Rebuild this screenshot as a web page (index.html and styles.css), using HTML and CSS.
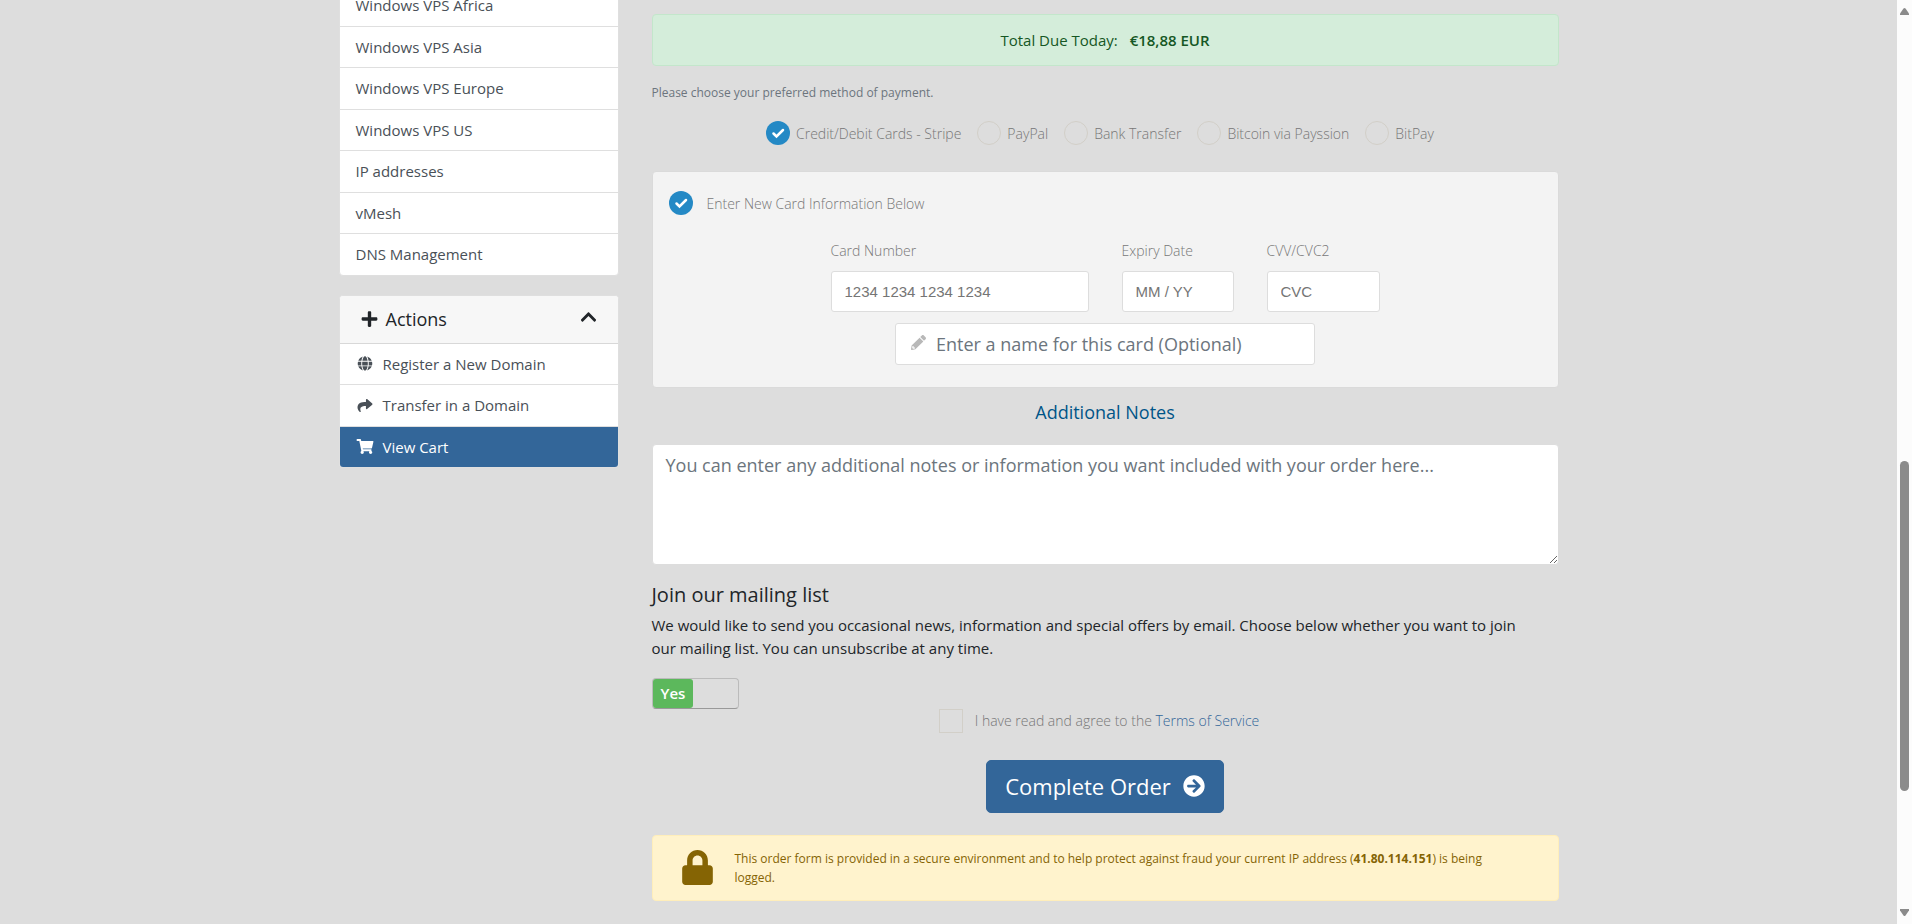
FILE: index.html
```html
<!DOCTYPE html>
<html lang="en">
<head>
<meta charset="utf-8">
<title>Checkout</title>
<link rel="stylesheet" href="styles.css">
</head>
<body>
<div class="page">
  <div class="container">
    <aside class="sidebar">
      <nav class="panel categories" aria-label="Categories">
        <a class="item" href="#">Windows VPS Africa</a>
        <a class="item" href="#">Windows VPS Asia</a>
        <a class="item" href="#">Windows VPS Europe</a>
        <a class="item" href="#">Windows VPS US</a>
        <a class="item" href="#">IP addresses</a>
        <a class="item" href="#">vMesh</a>
        <a class="item" href="#">DNS Management</a>
      </nav>
      <nav class="panel" aria-label="Actions">
        <div class="panel-head">
          <svg class="icon head-icon" viewBox="0 0 448 512"><path d="M416 208H272V64c0-17.67-14.33-32-32-32h-32c-17.67 0-32 14.33-32 32v144H32c-17.67 0-32 14.33-32 32v32c0 17.67 14.33 32 32 32h144v144c0 17.67 14.33 32 32 32h32c17.67 0 32-14.33 32-32V304h144c17.67 0 32-14.33 32-32v-32c0-17.67-14.33-32-32-32z"/></svg>
          <h3 class="panel-title">Actions</h3>
          <svg class="icon head-icon chevron" viewBox="0 0 448 512"><path d="M240.971 130.524l194.343 194.343c9.373 9.373 9.373 24.569 0 33.941l-22.667 22.667c-9.357 9.357-24.522 9.375-33.901.04L224 227.495 69.255 381.516c-9.379 9.335-24.544 9.317-33.901-.04l-22.667-22.667c-9.373-9.373-9.373-24.569 0-33.941L207.030 130.525c9.372-9.373 24.568-9.373 33.941-.001z"/></svg>
        </div>
        <a class="item" href="#"><svg class="icon item-icon" viewBox="0 0 496 512"><path d="M336.500 160C322 70.700 287.800 8 248 8s-74 62.700-88.500 152h177zM152 256c0 22.200 1.200 43.500 3.300 64h185.300c2.100-20.500 3.300-41.800 3.300-64s-1.200-43.500-3.300-64H155.300c-2.100 20.500-3.300 41.800-3.300 64zm324.700-96c-28.600-67.900-86.500-120.400-158-141.600 24.400 33.800 41.200 84.700 50 141.600h108zM177.200 18.400C105.800 39.600 47.800 92.100 19.300 160h108c8.700-56.900 25.500-107.800 49.900-141.600zM487.400 192H372.700c2.100 21 3.300 42.500 3.300 64s-1.200 43-3.300 64h114.600c5.500-20.500 8.600-41.800 8.600-64s-3.100-43.500-8.500-64zM120 256c0-21.500 1.200-43 3.300-64H8.600C3.200 212.500 0 233.800 0 256s3.200 43.500 8.600 64h114.600c-2-21-3.200-42.500-3.200-64zm39.500 96c14.500 89.300 48.700 152 88.500 152s74-62.700 88.500-152h-177zm159.300 141.600c71.400-21.200 129.400-73.700 158-141.600h-108c-8.800 56.900-25.600 107.800-50 141.600zM19.300 352c28.600 67.900 86.500 120.400 158 141.600-24.400-33.800-41.200-84.700-50-141.600h-108z"/></svg>Register a New Domain</a>
        <a class="item" href="#"><svg class="icon item-icon" viewBox="0 0 512 512"><path d="M503.691 189.836L327.687 37.851C312.281 24.546 288 35.347 288 56.015v80.053C127.371 137.907 0 170.100 0 322.326c0 61.441 39.581 122.309 83.333 154.132 13.653 9.931 33.111-2.533 28.077-18.631C66.066 312.814 132.917 274.316 288 272.085V360c0 20.700 24.300 31.453 39.687 18.164l176.004-152c11.071-9.562 11.086-26.753 0-36.328z"/></svg>Transfer in a Domain</a>
        <a class="item active" href="#"><svg class="icon item-icon" viewBox="0 0 576 512"><path d="M528.120 301.319l47.273-208C578.806 78.301 567.391 64 551.990 64H159.208l-9.166-44.810C147.758 8.021 137.930 0 126.529 0H24C10.745 0 0 10.745 0 24v16c0 13.255 10.745 24 24 24h69.883l70.248 343.435C147.325 417.100 136 435.222 136 456c0 30.928 25.072 56 56 56s56-25.072 56-56c0-15.674-6.447-29.835-16.824-40h209.647C430.447 426.165 424 440.326 424 456c0 30.928 25.072 56 56 56s56-25.072 56-56c0-22.172-12.888-41.332-31.579-50.405l5.517-24.276c3.413-15.018-8.002-29.319-23.403-29.319H218.117l-6.545-32h293.145c11.206 0 20.920-7.754 23.403-18.681z"/></svg>View Cart</a>
      </nav>
    </aside>

    <main class="checkout">
      <div class="alert total">Total Due Today: <strong>€18,88 EUR</strong></div>
      <p class="hint">Please choose your preferred method of payment.</p>
      <div class="methods">
        <label class="choice"><input class="radio" type="radio" name="method" checked>Credit/Debit Cards - Stripe</label>
        <label class="choice"><input class="radio" type="radio" name="method">PayPal</label>
        <label class="choice"><input class="radio" type="radio" name="method">Bank Transfer</label>
        <label class="choice"><input class="radio" type="radio" name="method">Bitcoin via Payssion</label>
        <label class="choice"><input class="radio" type="radio" name="method">BitPay</label>
      </div>

      <section class="card-box">
        <label class="choice new-card"><input class="radio" type="radio" name="card" checked>Enter New Card Information Below</label>
        <div class="card-fields">
          <div class="field"><label for="number">Card Number</label><input class="text-input" id="number" type="text" placeholder="1234 1234 1234 1234"></div>
          <div class="field"><label for="expiry">Expiry Date</label><input class="text-input" id="expiry" type="text" placeholder="MM / YY"></div>
          <div class="field"><label for="cvc">CVV/CVC2</label><input class="text-input" id="cvc" type="text" placeholder="CVC"></div>
        </div>
        <div class="card-name">
          <svg class="icon" viewBox="0 0 512 512"><path d="M497.900 142.100l-46.100 46.100c-4.700 4.700-12.300 4.700-17 0l-111-111c-4.700-4.700-4.700-12.300 0-17l46.100-46.100c18.700-18.700 49.100-18.700 67.900 0l60.100 60.100c18.800 18.700 18.800 49.100 0 67.900zM284.200 99.800L21.600 362.400.4 483.900c-2.900 16.400 11.400 30.600 27.800 27.800l121.500-21.300 262.600-262.600c4.700-4.700 4.700-12.300 0-17l-111-111c-4.800-4.700-12.400-4.700-17.100 0zM88 424h48v36.300l-64.500 11.300-31.100-31.100L51.700 376H88v48z"/></svg>
          <input type="text" aria-label="Card name" placeholder="Enter a name for this card (Optional)">
        </div>
      </section>

      <h2 class="notes-title">Additional Notes</h2>
      <textarea class="notes" aria-label="Additional Notes" placeholder="You can enter any additional notes or information you want included with your order here..."></textarea>

      <h3 class="mailing-title">Join our mailing list</h3>
      <p class="mailing-text">We would like to send you occasional news, information and special offers by email. Choose below whether you want to join our mailing list. You can unsubscribe at any time.</p>
      <button class="switch" type="button" role="switch" aria-checked="true" aria-label="Join our mailing list"><span class="switch-on">Yes</span></button>

      <div class="terms">
        <label class="choice"><input class="check" type="checkbox"><span>I have read and agree to the <a href="#">Terms of Service</a></span></label>
      </div>
      <button class="complete" type="submit">Complete Order
        <svg class="icon" viewBox="0 0 512 512"><path d="M256 8c137 0 248 111 248 248S393 504 256 504 8 393 8 256 119 8 256 8zm-28.900 143.600l75.500 72.400H120c-13.300 0-24 10.700-24 24v16c0 13.300 10.700 24 24 24h182.600l-75.500 72.400c-9.700 9.300-9.900 24.800-.4 34.300l11 10.900c9.400 9.400 24.600 9.400 33.900 0L404.300 273c9.400-9.400 9.400-24.600 0-33.900L271.600 106.300c-9.400-9.400-24.600-9.400-33.900 0l-11 10.900c-9.500 9.600-9.300 25.100.4 34.400z"/></svg>
      </button>
      <div class="alert secure">
        <svg class="icon" viewBox="0 0 448 512"><path d="M400 224h-24v-72C376 68.200 307.800 0 224 0S72 68.200 72 152v72H48c-26.500 0-48 21.500-48 48v192c0 26.500 21.500 48 48 48h352c26.500 0 48-21.500 48-48V272c0-26.500-21.500-48-48-48zm-104 0H152v-72c0-39.700 32.300-72 72-72s72 32.300 72 72v72z"/></svg>
        <p>This order form is provided in a secure environment and to help protect against fraud your current IP address (<strong>41.80.114.151</strong>) is being logged.</p>
      </div>
    </main>
  </div>
</div>
<div class="scrollbar" aria-hidden="true">
  <svg class="arrow" viewBox="0 0 9 7"><path d="M0 7V5.500L3.500.5Q4.500-.5 5.500.5L9 5.500V7z"/></svg>
  <div class="track"><div class="thumb"></div></div>
  <svg class="arrow" viewBox="0 0 9 7"><path d="M0 0V1.500L3.500 6.500Q4.500 7.500 5.500 6.500L9 1.500V0z"/></svg>
</div>
</body>
</html>
```

FILE: styles.css
```css
* {
  box-sizing: border-box;
}

body {
  margin: 0;
  height: 100vh;
  display: grid;
  grid-template-columns: 1fr 15px;
  overflow: hidden;
  background: #ddd;
  color: #212529;
  font: 15px/1.5 "Open Sans", "Noto Sans", sans-serif;
}

p, h2, h3 {
  margin: 0;
  font-weight: 400;
}

input, textarea, button {
  font: inherit;
}

a {
  text-decoration: none;
}

.icon {
  fill: currentColor;
  flex: none;
}

.page {
  overflow: hidden;
}

.container {
  max-width: 1220px;
  margin: 0 auto;
  display: grid;
  grid-template-columns: 280px 1fr;
  gap: 33px;
  align-items: start;
}

/* Sidebar */
.sidebar {
  display: grid;
  gap: 19px;
  margin-top: -16px;
}

.panel {
  background: #fff;
  border: 1px solid #dfdfdf;
  border-radius: 4px;
  overflow: hidden;
}

.item {
  display: flex;
  align-items: center;
  padding: 9px 16px;
  color: #495057;
}

.item + .item {
  border-top: 1px solid #dfdfdf;
}

.item-icon {
  width: 18px;
  height: 15px;
  margin-right: 9px;
}

.item.active {
  background: #336699;
  color: #fff;
}

.panel-head {
  display: flex;
  align-items: center;
  gap: 8px;
  padding: 10px 21px;
  background: #f7f7f7;
  border-bottom: 1px solid #d8d8d8;
}

.head-icon {
  width: 17px;
  height: 18px;
}

.chevron {
  margin-bottom: 4px;
}

.panel-title {
  flex: 1;
  font-size: 18px;
}

/* Payment */
.alert {
  border: 1px solid;
  border-radius: 4px;
}

.total {
  margin-top: 14px;
  padding: 14px 20px;
  background: #d4edda;
  border-color: #c3e6cb;
  color: #155724;
  line-height: 22px;
  text-align: center;
}

.total strong {
  margin-left: 8px;
  font-weight: 600;
}

.hint {
  margin-top: 18px;
  color: #6c757d;
  font-size: 12px;
}

.methods {
  display: flex;
  justify-content: center;
  gap: 16px;
  margin: 19px 10px 26px 0;
}

.choice {
  display: flex;
  align-items: center;
  gap: 6px;
  color: #777;
  font-size: 14px;
  font-weight: 300;
}

.radio, .check {
  appearance: none;
  flex: none;
  width: 24px;
  height: 24px;
  margin: 0;
  border: 1px solid #d2cfc8;
}

.radio {
  border-radius: 50%;
}

.radio:checked {
  border: 0;
  background: #2489c5 url("data:image/svg+xml,%3Csvg xmlns='http://www.w3.org/2000/svg' viewBox='0 0 24 24'%3E%3Cpath d='M7.500 12.500l3 3 6.500-6.500' fill='none' stroke='%23fff' stroke-width='2.500' stroke-linecap='round'/%3E%3C/svg%3E");
}

.card-box {
  padding: 19px 16px 22px;
  background: #f3f3f3;
  border: 1px solid #dadada;
  border-radius: 4px;
}

.new-card {
  gap: 14px;
}

.card-fields {
  display: grid;
  grid-template-columns: 258px 112px 113px;
  justify-content: center;
  gap: 33px;
  margin-top: 25px;
}

.field label {
  display: block;
  margin-bottom: 10px;
  color: #777;
  font-size: 14px;
  font-weight: 300;
}

.text-input {
  display: block;
  width: 100%;
  height: 41px;
  padding: 0 13px;
  border: 1px solid #ddd;
  border-radius: 3px;
  background: #fff;
  font: 15px "Liberation Sans", Arial, sans-serif;
}

.card-name {
  display: flex;
  align-items: center;
  gap: 10px;
  width: 420px;
  margin: 11px auto 0;
  padding: 0 15px;
  background: #fff;
  border: 1px solid #ddd;
  border-radius: 3px;
}

.card-name .icon {
  width: 15px;
  height: 15px;
  margin-bottom: 4px;
  fill: #b8b8b8;
}

.card-name input {
  flex: 1;
  min-width: 0;
  height: 40px;
  padding: 0;
  border: 0;
  font-size: 18px;
}

::placeholder {
  color: #757575;
}

.card-name ::placeholder, .notes::placeholder {
  color: #6c757d;
}

/* Notes and mailing list */
.notes-title {
  margin: 11px 0 18px;
  color: #058;
  font-size: 18px;
  text-align: center;
}

.notes {
  display: block;
  width: 100%;
  height: 121px;
  padding: 7px 13px;
  border: 1px solid #ddd;
  border-radius: 4px;
  background: #fff;
  font-size: 18px;
}

.mailing-title {
  margin: 15px 0 4px;
  font-size: 20px;
}

.mailing-text {
  padding-right: 19px;
  line-height: 23px;
}

.switch {
  display: flex;
  width: 87px;
  margin-top: 18px;
  padding: 0;
  border: 1px solid #bbb;
  border-bottom-color: #999;
  border-radius: 4px;
  background: transparent;
}

.switch-on {
  padding: 3px 8px;
  border-radius: 3px;
  background: #5cb85c;
  color: #fff;
  font-weight: 600;
}

.terms {
  display: flex;
  justify-content: center;
  margin-right: 12px;
}

.terms .choice {
  gap: 12px;
}

.terms a {
  color: #369;
}

.complete {
  display: flex;
  align-items: center;
  gap: 12px;
  margin: 27px auto 22px;
  padding: 9px 18px;
  border: 1px solid #369;
  border-radius: 5px;
  background: #369;
  color: #fff;
  font-size: 22px;
}

.complete .icon {
  width: 22px;
  height: 22px;
}

.secure {
  display: flex;
  align-items: center;
  gap: 22px;
  padding: 13px 50px 13px 29px;
  background: #fff3cd;
  border-color: #ffeeba;
  color: #856404;
  font-size: 12px;
  line-height: 19px;
}

.secure .icon {
  width: 31px;
  height: 35px;
}

.secure strong {
  font-weight: 700;
}

/* Scrollbar */
.scrollbar {
  display: flex;
  flex-direction: column;
  align-items: center;
  gap: 5px;
  padding: 8px 0;
  background: #fcfcfc;
}

.arrow {
  width: 9px;
  height: 7px;
  fill: #8b8b8b;
}

.track {
  flex: 1;
  display: grid;
  grid-template-rows: 441fr 330fr 113fr;
}

.thumb {
  grid-row: 2;
  width: 9px;
  border-radius: 5px;
  background: #8b8b8b;
}
```
